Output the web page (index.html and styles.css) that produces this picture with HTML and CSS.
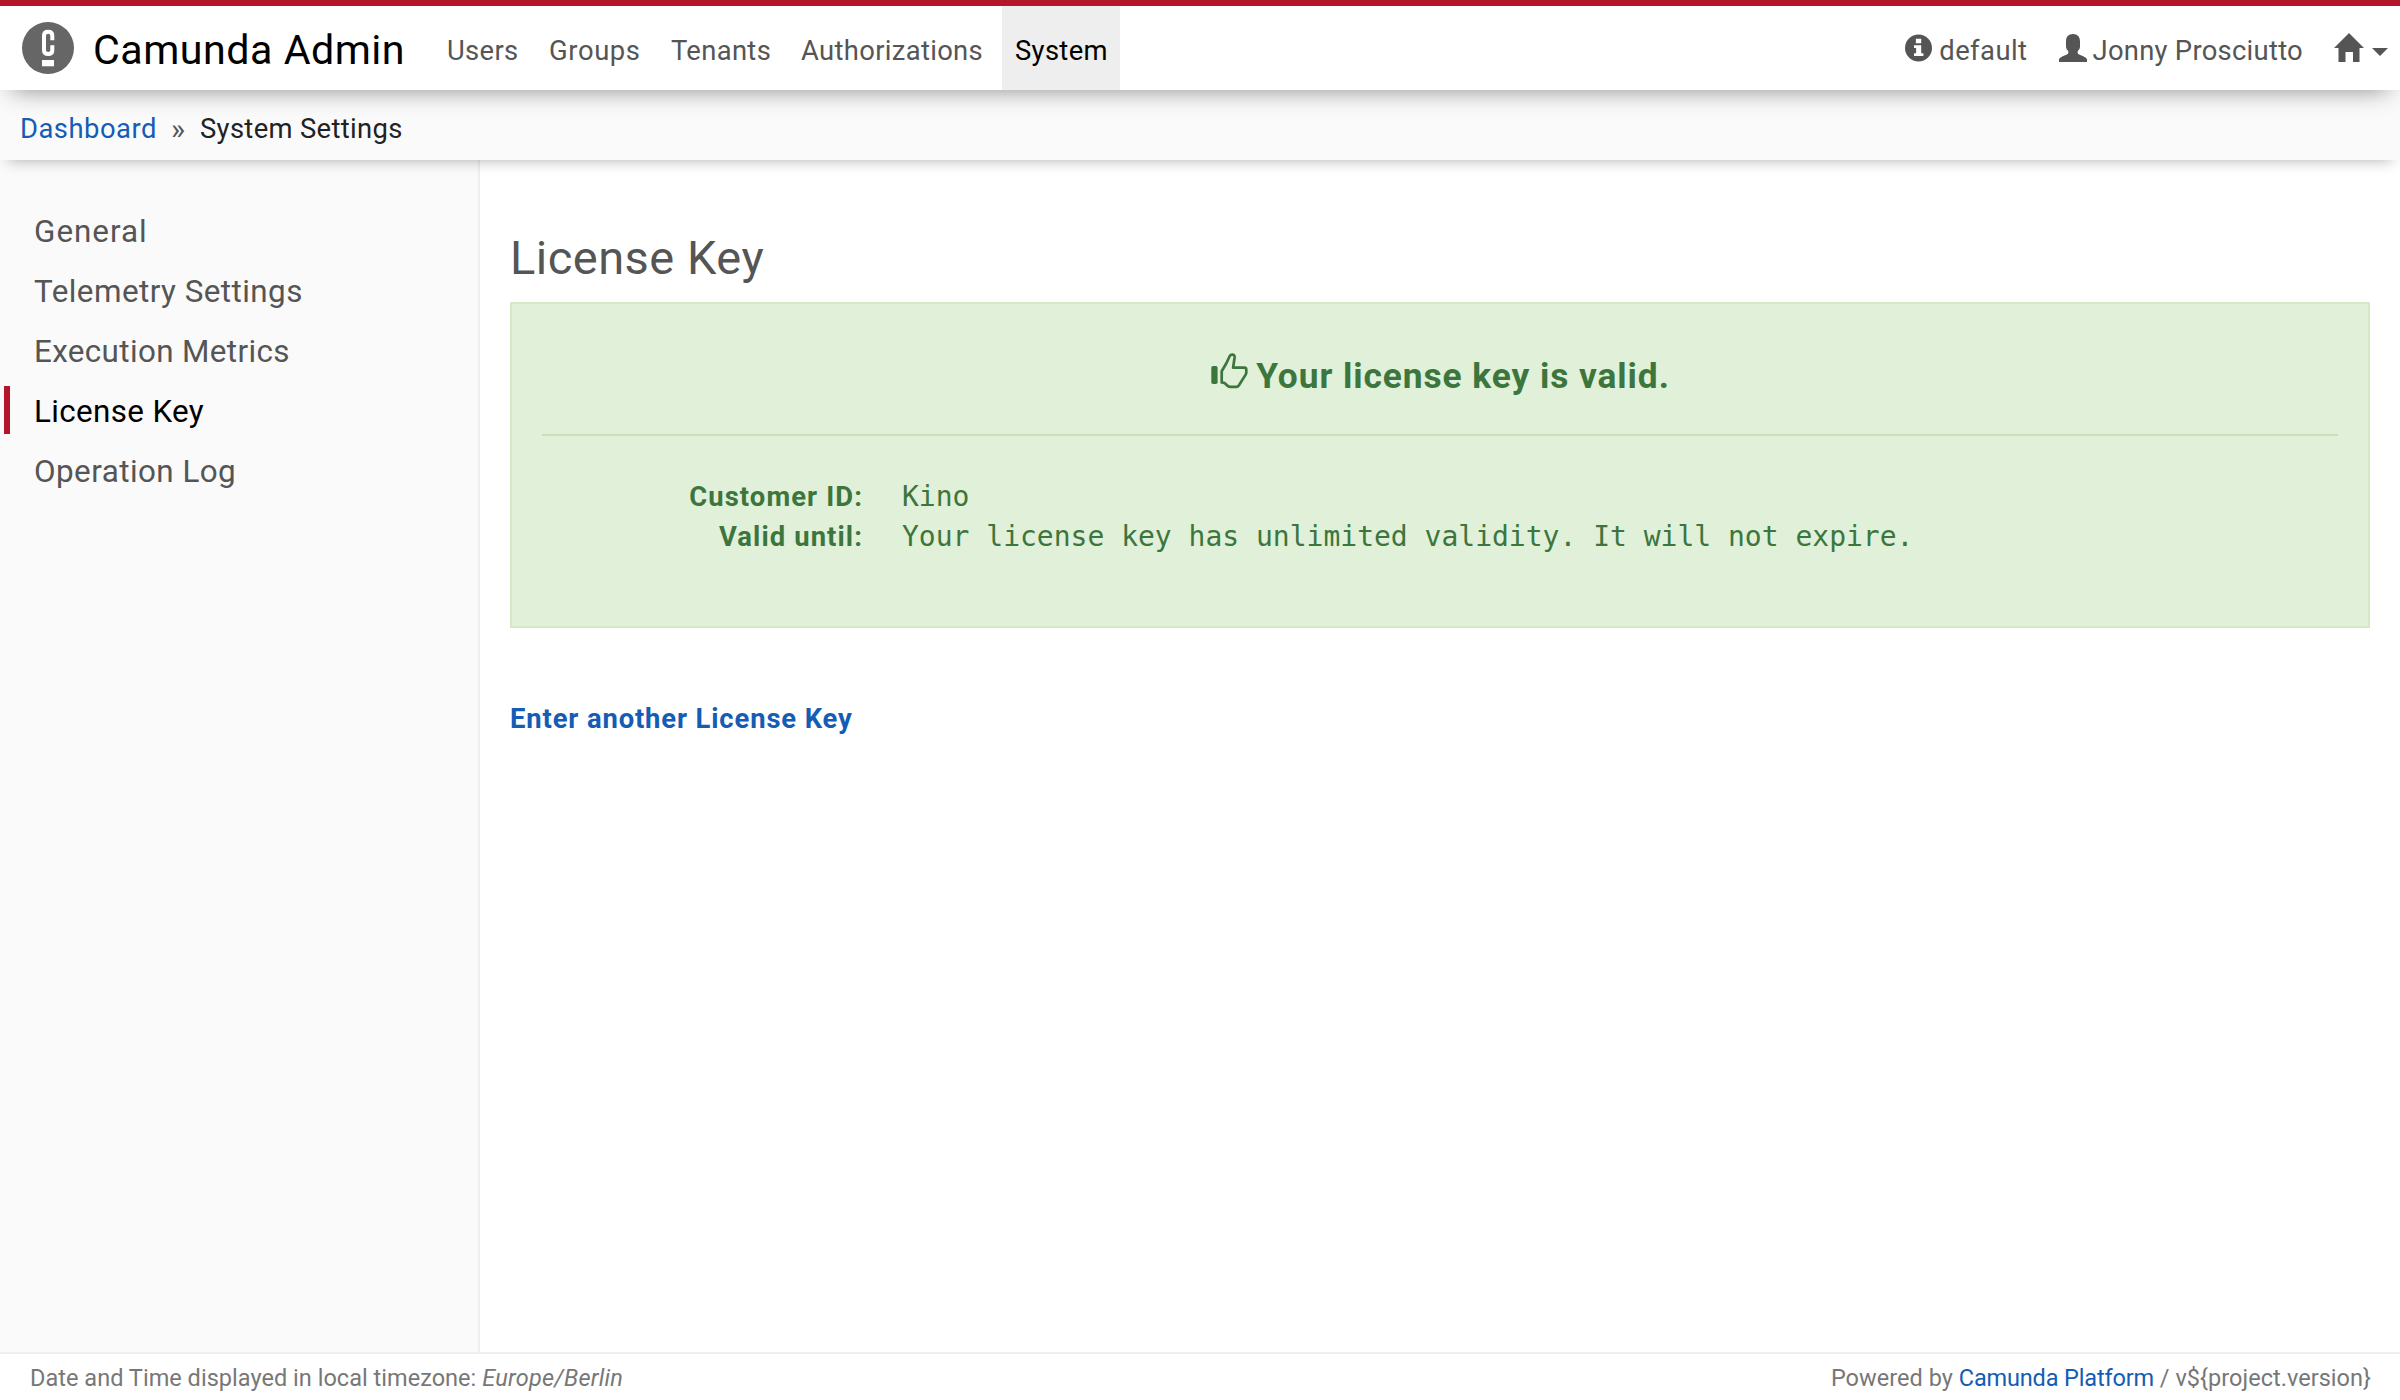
FILE: index.html
```html
<!DOCTYPE html>
<html lang="en">
<head>
<meta charset="utf-8">
<title>Camunda Admin</title>
<link rel="stylesheet" href="styles.css">
</head>
<body>
<header class="header">
  <a class="brand">
    <svg class="brand-logo" viewBox="0 0 52 52"><circle cx="26" cy="26" r="26" fill="#666"/><path d="M30.3 18.3V13.500Q30.3 9.800 26.200 9.800Q22 9.800 22 13.500V28.200Q22 32 26.200 32Q30.300 32 30.300 28.200V23.300" fill="none" stroke="#fff" stroke-width="4"/><path d="M20 38h12v6.300H20z" fill="#fff"/></svg>
    <span class="brand-name">Camunda Admin</span>
  </a>
  <nav class="nav">
    <a class="nav-link users">Users</a>
    <a class="nav-link groups">Groups</a>
    <a class="nav-link">Tenants</a>
    <a class="nav-link">Authorizations</a>
    <a class="nav-link active">System</a>
  </nav>
  <div class="account">
    <a class="account-item engine">
      <svg class="icon-info" viewBox="0 0 27 28"><circle cx="13.500" cy="14" r="13.500" fill="#555"/><path d="M10.900 4.800h5.300v4.400h-5.300zM9 11.200h7.200v8.100h2.200v2.700H9v-2.700h2.100v-5.400H9z" fill="#fff"/></svg>
      <span>default</span>
    </a>
    <a class="account-item user">
      <svg class="icon-user" viewBox="0 0 28 28"><path d="M14 0c4.600 0 7 3 7 7.200v5.200c0 2.300-1.200 3.500-2.300 4.600v1.700c0 1 .7 1.400 2 2 3 1.200 7.300 3 7.300 4.800V28H0v-2.500c0-1.800 4.300-3.600 7.300-4.800 1.300-.6 2-1 2-2V17C8.200 15.900 7 14.700 7 12.400V7.200C7 3 9.400 0 14 0z" fill="#555"/></svg>
      <span>Jonny Prosciutto</span>
    </a>
    <a class="account-item home">
      <svg class="icon-home" viewBox="0 0 30 29"><path d="M15 0l15 15h-4.500v14h-6.500V19h-7.500v10H4.500V15H0z" fill="#555"/></svg>
      <svg class="icon-caret" viewBox="0 0 16 8"><path d="M0 0h16l-8 8z" fill="#555"/></svg>
    </a>
  </div>
</header>
<div class="breadcrumbs">
  <a class="crumb-link">Dashboard</a>
  <span class="crumb-divider">»</span>
  <span class="crumb-current">System Settings</span>
</div>
<div class="page">
  <aside class="sidebar">
    <a class="side-link general">General</a>
    <a class="side-link">Telemetry Settings</a>
    <a class="side-link metrics">Execution Metrics</a>
    <a class="side-link active">License Key</a>
    <a class="side-link">Operation Log</a>
  </aside>
  <main class="content">
    <h1 class="title">License Key</h1>
    <section class="alert">
      <h2 class="alert-title">
        <svg class="icon-thumb" viewBox="0 0 40 36"><rect x="1.300" y="13" width="6.300" height="18" rx="1.800" fill="#3c763d"/><path d="M11.700 29.500V18.200l4.800-8.200 2.900-6.200c.6-1.600 1.600-2.200 2.900-2.200 1.600 0 2.500 1.100 2.300 2.900l-1.500 10.200h11.200c1.400 0 2 .9 2 2.100v2.600c0 1-.3 1.700-.8 2.500l-6.700 10.600c-.6.900-1.400 1.300-2.400 1.300h-6.200c-1.400 0-2.400-.6-3.300-1.500l-1.500-1.500c-.7-.7-1.200-1-2.200-1.100z" fill="none" stroke="#3c763d" stroke-width="2.700" stroke-linejoin="round"/></svg>
        <span>Your license key is valid.</span>
      </h2>
      <dl class="license">
        <dt class="license-label">Customer ID:</dt>
        <dd class="license-value">Kino</dd>
        <dt class="license-label">Valid until:</dt>
        <dd class="license-value">Your license key has unlimited validity. It will not expire.</dd>
      </dl>
    </section>
    <a class="change-link">Enter another License Key</a>
  </main>
</div>
<footer class="footer">
  <div>Date and Time displayed in local timezone: <em class="timezone">Europe/Berlin</em></div>
  <div>Powered by <a class="platform-link">Camunda Platform</a> / v${project.version}</div>
</footer>
</body>
</html>
```
FILE: styles.css
```css
* { box-sizing: border-box; }

body {
  margin: 0;
  height: 1400px;
  display: flex;
  flex-direction: column;
  background: #fff;
  color: #555;
  font: 27.4px/40px Roboto, sans-serif;
  letter-spacing: .33px;
  white-space: nowrap;
}

svg { display: block; flex: none; }

/* Header */
.header {
  position: relative;
  z-index: 2;
  flex: none;
  display: flex;
  height: 90px;
  border-top: 6px solid #b5152b;
  background: #fff;
  box-shadow: 0 12px 24px -12px rgba(0, 0, 0, .45);
}

.brand {
  display: flex;
  align-items: center;
  width: 433px;
  padding-left: 22px;
  gap: 19px;
  color: #000;
}

.brand-logo { width: 52px; height: 52px; }

.brand-name {
  padding-top: 4px;
  font-size: 41.2px;
  letter-spacing: .5px;
}

.nav {
  display: grid;
  grid-template-columns: 102px 122px 130px 215px 118px;
}

.nav-link {
  display: flex;
  align-items: center;
  padding: 5px 0 0 14px;
}

.nav-link.groups { letter-spacing: .62px; }
.nav-link.active { background: #eee; color: #000; padding-left: 13px; }

.account {
  display: flex;
  align-items: center;
  margin-left: auto;
  padding: 0 12px 0 0;
}

.account-item {
  display: flex;
  align-items: center;
  height: 100%;
  padding-top: 5px;
}

.engine { gap: 7px; margin-right: 31px; letter-spacing: .45px; }
.user { gap: 6px; margin-right: 31px; letter-spacing: .27px; }
.home { gap: 8px; }
.icon-info { width: 27px; height: 28px; margin-bottom: 5px; }
.icon-user { width: 28px; height: 28px; margin-bottom: 5px; }
.icon-home { width: 30px; height: 29px; margin-bottom: 6px; }
.icon-caret { width: 16px; height: 8px; margin-top: 3px; }

/* Breadcrumbs */
.breadcrumbs {
  position: relative;
  z-index: 1;
  flex: none;
  display: flex;
  align-items: center;
  height: 70px;
  padding: 7px 0 0 20px;
  background: #fafafa;
  box-shadow: 0 8px 14px -8px rgba(0, 0, 0, .32);
}

.crumb-link { color: #155cb5; letter-spacing: .5px; width: 151px; }
.crumb-divider { width: 29px; font-size: 30px; }
.crumb-current { color: #222; }

/* Page */
.page {
  flex: 1;
  display: flex;
}

.sidebar {
  width: 480px;
  display: flex;
  flex-direction: column;
  gap: 12px;
  padding: 46px 0 0 4px;
  border-right: 2px solid #eee;
  background: #fafafa;
}

.side-link {
  height: 48px;
  padding: 3px 0 0 24px;
  border-left: 6px solid transparent;
  font-size: 31.4px;
  line-height: 45px;
  letter-spacing: .45px;
}

.side-link.general { letter-spacing: 1px; }
.side-link.metrics { letter-spacing: .36px; }
.side-link.active { border-color: #b5152b; color: #000; letter-spacing: .35px; }

.content {
  flex: 1;
  padding: 68px 30px 0;
}

.title {
  margin: 0 0 14px;
  font-size: 47px;
  font-weight: 400;
  line-height: 60px;
  letter-spacing: .48px;
}

.alert {
  height: 326px;
  padding: 48px 30px 0;
  border: 2px solid #d6e9c6;
  background: #e0f0d9;
  color: #3c763d;
}

.alert-title {
  display: flex;
  justify-content: center;
  gap: 6px;
  margin: 0;
  height: 84px;
  border-bottom: 2px solid #c9e2b3;
  font-size: 35.3px;
  line-height: 48px;
  letter-spacing: .93px;
}

.icon-thumb { width: 40px; height: 36px; margin-top: 1px; }

.license {
  display: grid;
  grid-template-columns: 321px 1fr;
  grid-auto-rows: 40px;
  column-gap: 39px;
  margin: 41px 0 0;
}

.license-label {
  font-weight: 700;
  letter-spacing: 1.1px;
  text-align: right;
}

.license-value {
  margin: 0;
  font-family: "DejaVu Sans Mono", monospace;
  font-size: 28px;
  letter-spacing: 0;
}

.change-link {
  display: block;
  margin-top: 71px;
  color: #155cb5;
  font-weight: 700;
  letter-spacing: .87px;
}

/* Footer */
.footer {
  flex: none;
  display: flex;
  justify-content: space-between;
  align-items: center;
  height: 48px;
  padding: 2px 29px 0 30px;
  border-top: 2px solid #eee;
  color: #777;
  font-size: 23.5px;
  letter-spacing: .03px;
}

.timezone { letter-spacing: .24px; }
.platform-link { color: #155cb5; letter-spacing: -.15px; }
```
